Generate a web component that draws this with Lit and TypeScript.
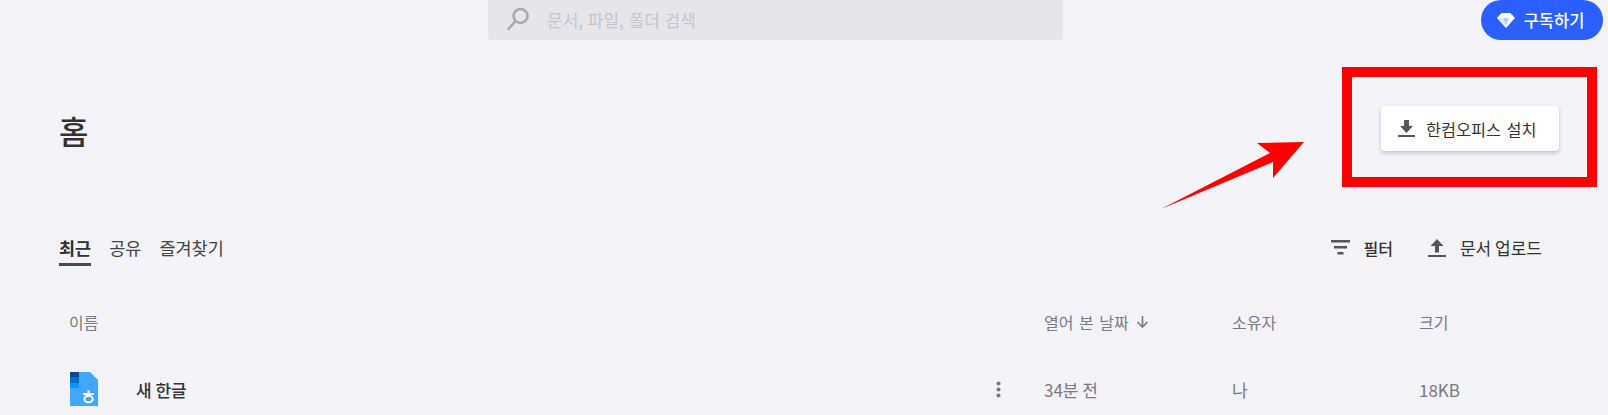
import { LitElement, html, css } from "lit";
import { customElement } from "lit/decorators.js";

@customElement("app-root")
export class AppRoot extends LitElement {
  static styles = css`
    :host { display: block; position: relative; height: 415px; overflow: hidden; background: #f2f2f7;
      font-family: "Noto Sans CJK KR", "Noto Sans", sans-serif; color: #333; }
    .top { display: flex; height: 40px; padding-left: 488px; padding-right: 5px; }
    .search { width: 575px; height: 40px; box-sizing: border-box; background: #e5e5ea; border-radius: 0 0 3px 3px;
      display: flex; align-items: center; gap: 17px; padding: 0 0 2px 18px; font-size: 17px; word-spacing: 1px; color: #c6c6cb; }
    .sub { margin-left: auto; width: 122px; height: 40px; box-sizing: border-box; padding-right: 3px; background: #2b5fff; border-radius: 20px; color: #fff;
      display: flex; align-items: center; justify-content: center; gap: 9px; font-size: 16.5px; font-weight: 500; }
    .title { display: flex; justify-content: space-between; align-items: center; margin-top: 66px; padding: 0 49px 0 59px; height: 45px; }
    h1 { margin: 4px 0 0; font-size: 32px; font-weight: 500; line-height: 45px; color: #333; }
    .install { width: 178px; height: 45px; box-sizing: border-box; background: #fff; border-radius: 4px;
      box-shadow: 0 2px 4px rgba(0,0,0,.2); display: flex; align-items: center; gap: 11px; padding-left: 17px;
      font-size: 16.3px; word-spacing: 2px; color: #333; }
    .bar { display: flex; justify-content: space-between; margin-top: 78px; padding: 0 66px 0 59px; height: 40px; }
    .tabs { display: flex; gap: 18px; font-size: 17.5px; color: #444; }
    .tab { height: 37px; box-sizing: border-box; padding-top: 4px; line-height: 29px; }
    .tab.on { font-weight: 700; color: #333; border-bottom: 3px solid #4a4a4f; }
    .actions { display: flex; gap: 35px; font-size: 17px; color: #333; }
    .act { display: flex; align-items: center; gap: 14px; height: 37px; }
    .act.small { font-size: 16px; font-weight: 500; }
    .grid { display: grid; grid-template-columns: 975px 188px 187px 1fr; padding-left: 69px; font-size: 16px; word-spacing: 2px; color: #7a7a80; }
    .head { margin-top: 30px; height: 45px; align-items: center; }
    .row { margin-top: 23px; height: 44px; align-items: center; font-size: 17px; word-spacing: 0; }
    .sort { display: flex; align-items: center; gap: 7px; }
    .name { display: flex; align-items: center; color: #333; font-weight: 500; }
    .name svg:first-child { margin-left: 1px; }
    .name span { margin-left: 38px; }
    .dots { margin-left: auto; margin-right: 43px; display: flex; }
    .note { position: absolute; left: 0; top: 0; pointer-events: none; }
  `;

  render() {
    return html`
      <div class="top">
        <div class="search">
          <svg width="24" height="24" viewBox="0 0 24 24" fill="none" stroke="#a9a9ae" stroke-width="2.6">
            <circle cx="14.5" cy="9" r="7" /><path d="M9.5 14 2.5 22" stroke-linecap="round" />
          </svg>
          문서, 파일, 폴더 검색
        </div>
        <div class="sub">
          <svg width="18" height="15" viewBox="0 0 18 15">
            <path d="M4.5 0h9L18 5 9 15 0 5z" fill="#fff" />
            <path d="M6 5h6l-3 8z" fill="#b9c9ff" /><path d="M0 5h6l3 8z" fill="#dfe7ff" />
          </svg>
          구독하기
        </div>
      </div>
      <div class="title">
        <h1>홈</h1>
        <div class="install">
          <svg width="17" height="17" viewBox="0 0 17 17" fill="#555">
            <path d="M6 0h5v6h4l-6.500 7L2 6h4zM0 15h17v2H0z" />
          </svg>
          한컴오피스 설치
        </div>
      </div>
      <div class="bar">
        <div class="tabs">
          <div class="tab on">최근</div>
          <div class="tab">공유</div>
          <div class="tab">즐겨찾기</div>
        </div>
        <div class="actions">
          <div class="act small">
            <svg width="19" height="15" viewBox="0 0 19 15" fill="#555">
              <path d="M0 0h19v2.500H0zM3 6h13v2.500H3zM6.500 12h6v2.500h-6z" />
            </svg>
            필터
          </div>
          <div class="act">
            <svg width="18" height="18" viewBox="0 0 18 18" fill="#555">
              <path d="M9 0l6.500 7H11v6.500H7V7H2.500zM0 16h18v2H0z" />
            </svg>
            문서 업로드
          </div>
        </div>
      </div>
      <div class="grid head">
        <div>이름</div>
        <div class="sort">
          열어 본 날짜
          <svg width="13" height="13" viewBox="0 0 13 13" fill="none" stroke="#77777c" stroke-width="1.600">
            <path d="M6.500 1v11M1.500 7l5 5 5-5" />
          </svg>
        </div>
        <div>소유자</div>
        <div>크기</div>
      </div>
      <div class="grid row">
        <div class="name">
          <svg width="28" height="34" viewBox="0 0 28 34">
            <path d="M0 0h20l8 8v26H0z" fill="#42a8ff" />
            <rect width="9" height="5.500" fill="#0b4a8f" />
            <rect y="5.500" width="9" height="5.500" fill="#0070cc" />
            <rect y="11" width="9" height="5" fill="#0a94ff" />
            <path d="M18.500 18.500v3.500M13 22h11" stroke="#fff" stroke-width="2" fill="none" />
            <ellipse cx="18.500" cy="27" rx="4.200" ry="3.300" stroke="#fff" stroke-width="2" fill="none" />
          </svg>
          <span>새 한글</span>
          <svg class="dots" width="5" height="17" viewBox="0 0 5 17" fill="#77777c">
            <circle cx="2.500" cy="2.500" r="2" /><circle cx="2.500" cy="8.500" r="2" /><circle cx="2.500" cy="14.500" r="2" />
          </svg>
        </div>
        <div>34분 전</div>
        <div>나</div>
        <div>18KB</div>
      </div>
      <svg class="note" width="1608" height="415" viewBox="0 0 1608 415">
        <rect x="1347" y="72" width="245" height="110" fill="none" stroke="#f00" stroke-width="10" />
        <path d="M1161 209 1270 153 1257 143 1304 142 1273 178 1273 162z" fill="#f00" />
      </svg>
    `;
  }
}
